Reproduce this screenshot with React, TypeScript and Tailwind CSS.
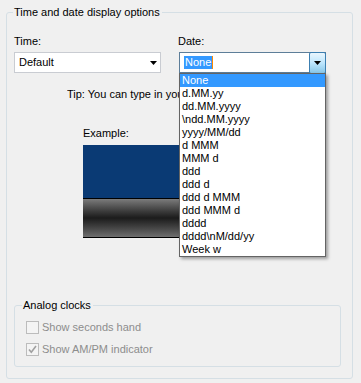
import React from 'react';

const FORMATS = [
  'None',
  'd.MM.yy',
  'dd.MM.yyyy',
  '\\ndd.MM.yyyy',
  'yyyy/MM/dd',
  'd MMM',
  'MMM d',
  'ddd',
  'ddd d',
  'ddd d MMM',
  'ddd MMM d',
  'dddd',
  'dddd\\nM/dd/yy',
  'Week w',
];

function Arrow() {
  return (
    <svg width="7" height="4" viewBox="0 0 7 4" className="block">
      <path d="M0 0h7L3.5 4z" fill="#000" />
    </svg>
  );
}

function Check({ checked, label }: { checked?: boolean; label: string }) {
  return (
    <div className="flex items-center gap-[3px] h-[13px]">
      <div className="w-[13px] h-[13px] border border-[#bcbcbc] bg-[#f4f4f4] flex items-center justify-center">
        {checked && (
          <svg width="9" height="9" viewBox="0 0 9 9">
            <path d="M1 4.5l2.3 2.8L8 1" stroke="#a0a0a0" strokeWidth="1.6" fill="none" />
          </svg>
        )}
      </div>
      <span className="text-[#8d8d8d]">{label}</span>
    </div>
  );
}

export default function App() {
  return (
    <div className="w-[361px] h-[383px] bg-[#f0f0f0] px-[6px] pt-[6px] font-['Liberation_Sans',Arial,sans-serif] text-[11px] leading-[13px] text-black overflow-hidden">
      <fieldset className="border border-[#d5dfe5] rounded-[3px] h-[373px] w-[347px] pl-[7px]">
        <legend className="-ml-[1px] pl-[1px] pr-[2px]">Time and date display options</legend>

        {/* Time / Date row */}
        <div className="grid grid-cols-[165px_1fr] pt-[16px]">
          <div>
            <div>Time:</div>
            <div className="mt-[4px] w-[147px] h-[21px] bg-white border border-[#c9ccd2] flex items-center justify-between pl-[4px] pr-[3px]">
              <span>Default</span>
              <Arrow />
            </div>
          </div>
          <div>
            <div className="-ml-[1px]">Date:</div>
            <div className="relative mt-[4px] w-[147px]">
              <div className="h-[21px] bg-white border border-[#5d7e99] flex items-center pl-[4px]">
                <span className="bg-[#3399ff] text-white px-[1px] border-r border-[#ff8a00]">None</span>
              </div>
              <div className="absolute right-0 top-0 w-[17px] h-[22px] border border-[#3c7fb1] rounded-[2px] bg-gradient-to-b from-[#eaf6fd] via-[#bee6fd] to-[#86c6e8] flex items-center justify-center">
                <Arrow />
              </div>

              {/* Open list */}
              <div className="absolute left-0 top-[21px] w-[147px] bg-white border border-[#646464] shadow-[2px_2px_3px_rgba(0,0,0,0.35)] z-10">
                {FORMATS.map((f, i) => (
                  <div
                    key={f}
                    className={i === 0 ? 'h-[13px] pl-[2px] bg-[#3399ff] text-white' : 'h-[13px] pl-[2px]'}
                  >
                    {f}
                  </div>
                ))}
              </div>
            </div>
          </div>
        </div>

        {/* Tip (runs under the open list) */}
        <div className="mt-[15px] ml-[53px] w-[112px] overflow-hidden whitespace-nowrap">
          Tip: You can type in your own format
        </div>

        {/* Example */}
        <div className="mt-[26px] ml-[69px]">Example:</div>
        <div className="mt-[5px] ml-[69px] w-[195px] flex flex-col">
          <div className="h-[53px] bg-[#0a3a74]" />
          <div className="h-[1px] bg-black" />
          <div className="h-[38px] bg-gradient-to-b from-[#7c7c7c] via-[#1c1c1c] to-[#6e6e6e]" />
          <div className="h-[1px] bg-black" />
        </div>

        {/* Analog clocks */}
        <fieldset className="mt-[61px] w-[327px] h-[68px] border border-[#d5dfe5] rounded-[3px] pl-[8px]">
          <legend className="-ml-[1px] pl-[1px] pr-[2px]">Analog clocks</legend>
          <div className="pt-[9px] pl-[3px] flex flex-col gap-[9px]">
            <Check label="Show seconds hand" />
            <Check checked label="Show AM/PM indicator" />
          </div>
        </fieldset>
      </fieldset>
    </div>
  );
}
